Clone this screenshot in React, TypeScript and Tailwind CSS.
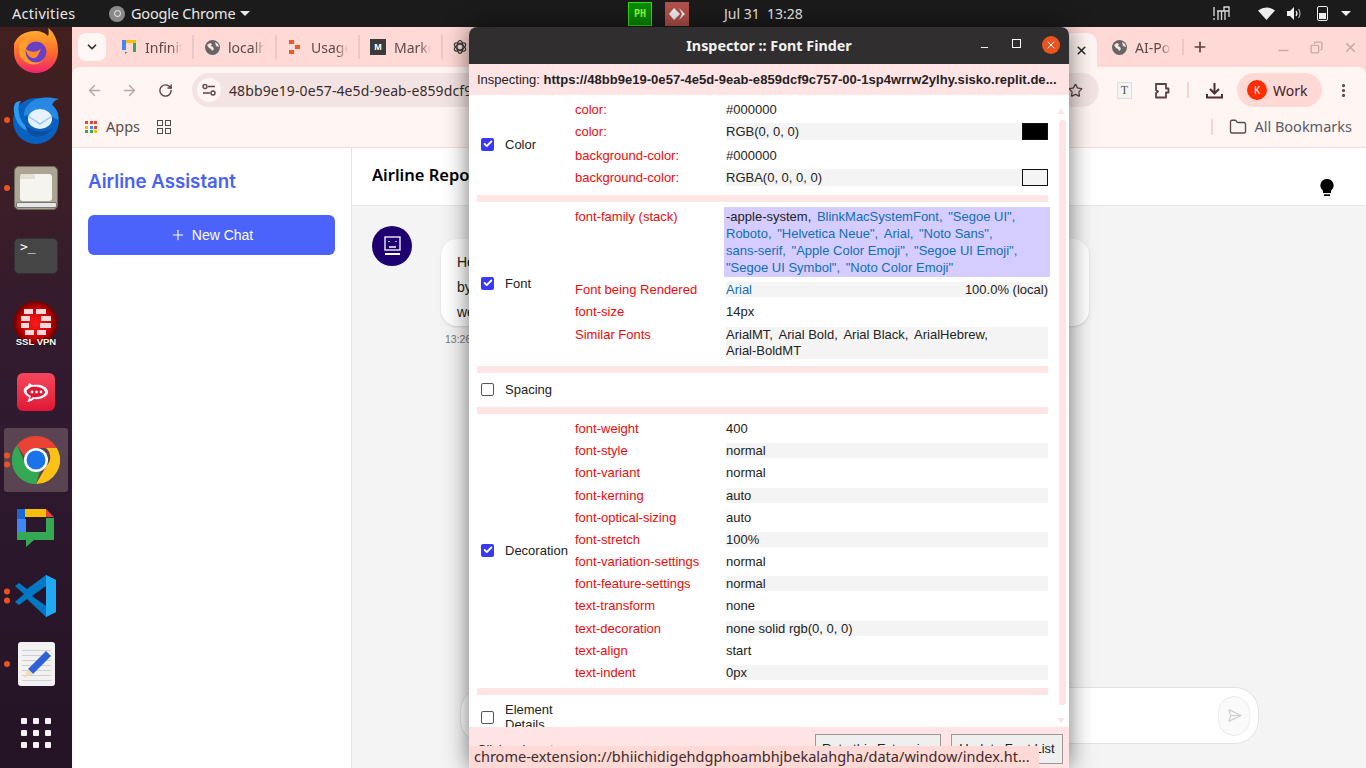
import React from 'react';
import { ArrowLeft, ArrowRight, Check, ChevronDown, Copy, Folder, Minus, MoreVertical, Plus, RotateCw, SendHorizontal, Star, X } from 'lucide-react';

const sans = 'font-["Liberation_Sans",Arial,sans-serif]';

const Dot = ({ n = 1 }: { n?: number }) => (
  <div className="absolute left-[4px] top-1/2 -translate-y-1/2 flex flex-col gap-[3px]">
    {Array.from({ length: n }).map((_, i) => <div key={i} className="w-[6px] h-[6px] rounded-full bg-[#e95420]" />)}
  </div>
);

const Firefox = () => (
  <svg width="46" height="46" viewBox="0 0 46 46">
    <defs><linearGradient id="ff" x1="0" y1="0" x2="0" y2="1"><stop offset="0" stopColor="#ffb52e" /><stop offset="0.55" stopColor="#ff6a2b" /><stop offset="1" stopColor="#f0246f" /></linearGradient></defs>
    <path d="M1 16C4 8 12 3 22 3c6 0 10 2 13 5 1-3 1-5 0-8 6 4 10 12 10 23 0 13-10 22-22 22S1 36 1 24z" fill="url(#ff)" />
    <path d="M6 17c3-6 10-8 15-7-4 1-6 3-7 5 5-1 14 0 18 7 2 6-1 12-8 14-8 2-16-3-18-11z" fill="#ff9c2e" />
    <circle cx="23" cy="24" r="10.500" fill="#6a3fc4" />
    <path d="M13 21c5 4 11 3 15 0-2 4-3 8-6 9-5 1-9-4-9-9z" fill="#ff8a2e" />
  </svg>
);

const Thunderbird = () => (
  <svg width="50" height="48" viewBox="0 0 50 48">
    <circle cx="25" cy="25" r="23" fill="#0a62c0" />
    <path d="M3 16C2 8 5 5 10 5c-3 4-3 8-2 12 1 8 6 14 14 18C12 36 5 28 3 16z" fill="#2f9bee" />
    <path d="M17 9C23 1 36 0 48 3c-4 1-6 3-7 6 5 4 7 9 6 15-8-6-24-8-34-4 0-5 1-8 4-11z" fill="#2688e3" />
    <ellipse cx="29" cy="23" rx="12" ry="10" fill="#e6f2fd" />
    <path d="M17 20l12 8 12-8" fill="none" stroke="#9cc6ee" strokeWidth="1.500" />
    <path d="M14 28c6 8 18 10 28 4-6 8-14 10-20 8-4-2-7-6-8-12z" fill="#0d4f9e" />
  </svg>
);

const FilesIcon = () => (
  <div className="w-[44px] h-[44px] rounded-[5px] bg-[#aca593] border border-[#6f6a5e] flex flex-col items-center justify-end relative">
    <div className="w-[32px] h-[27px] mb-[1px] bg-[#f6f4ee] rounded-[3px]" />
    <div className="w-[41px] h-[6px] mb-[1px] bg-[#e6e6e6] rounded-[2px] border border-[#777]" />
    <div className="absolute left-[5px] top-[7px] w-[15px] h-[5px] rounded-t-[3px] bg-[#e4e0d6]" />
  </div>
);

const TerminalIcon = () => (
  <div className="w-[44px] h-[36px] rounded-[5px] bg-[#454545] border border-[#333] relative">
    <span className={`absolute left-[5px] top-0 text-[13px] leading-4 text-white font-["DejaVu_Sans_Mono",monospace]`}>&gt;_</span>
  </div>
);

const VpnIcon = () => (
  <div className="relative w-[46px] h-[46px]">
    <svg width="46" height="44" viewBox="0 0 46 44">
      <defs><radialGradient id="vp"><stop offset="0" stopColor="#ff1c1c" /><stop offset="0.7" stopColor="#c40000" /><stop offset="1" stopColor="#6b0000" /></radialGradient></defs>
      <circle cx="22.500" cy="22" r="22" fill="url(#vp)" />
      <g fill="#ffd9d9">
        <path d="M11 8h9v5h-9zM23 8h10v5H23zM8 15h9v5H8zM28 15h10v5H28zM8 22h8v5H8zM27 22h11v5H27zM12 29h9v5h-9zM24 29h9v5h-9z" />
      </g>
    </svg>
    <span className={`absolute left-0 right-0 bottom-0 text-center text-[9.500px] leading-[10px] font-bold text-white [text-shadow:0_0_2px_#000] ${sans}`}>SSL VPN</span>
  </div>
);

const RocketIcon = () => (
  <div className="w-[38px] h-[38px] rounded-[6px] bg-gradient-to-b from-[#f5455c] to-[#e11436] flex items-center justify-center">
    <svg width="28" height="24" viewBox="0 0 28 24">
      <path d="M7 3c2 1 3 2 4 2 5-1 13 0 15 6 1 5-7 9-14 8-2 2-5 3-7 3 1-1 2-3 2-5C3 15 1 12 2 9c1-2 2-3 4-3z" fill="#fff" />
      <path d="M9 7c5-1 13 0 14 5 0 3-6 6-12 5-1 1-2 2-3 2l1-3C5 14 4 12 5 10c1-1 3-2 4-3z" fill="#e11436" />
      <circle cx="10" cy="12" r="1.400" fill="#fff" /><circle cx="14.500" cy="12" r="1.400" fill="#fff" /><circle cx="19" cy="12" r="1.400" fill="#fff" />
    </svg>
  </div>
);

const ChromeIcon = ({ size = 48 }: { size?: number }) => (
  <svg width={size} height={size} viewBox="0 0 48 48">
    <path d="M24 0a24 24 0 0 1 20.800 12H24a12 12 0 0 0-11.500 8.500L5 9A24 24 0 0 1 24 0z" fill="#ea4335" />
    <path d="M44.800 12A24 24 0 0 1 24 48l10.400-18A12 12 0 0 0 34 12z" fill="#fbc116" />
    <path d="M24 48A24 24 0 0 1 5 9l9.600 21A12 12 0 0 0 28 35.300z" fill="#34a853" />
    <circle cx="24" cy="24" r="12" fill="#fff" /><circle cx="24" cy="24" r="9.500" fill="#1a73e8" />
  </svg>
);

const ChatIcon = () => (
  <svg width="38" height="38" viewBox="0 0 38 38">
    <path d="M0 0h8v10H0z" fill="#1a67d2" /><path d="M0 10h9v13H0z" fill="#4285f4" /><path d="M0 23h9v8H0z" fill="#188038" />
    <path d="M8 0h21v8H8z" fill="#fbbc04" /><path d="M29 0l8 8h-8z" fill="#ea4335" />
    <path d="M29 9h8v22H17l-8 7v-7H0v-8h29z" fill="#34a853" />
  </svg>
);

const VsCodeIcon = () => (
  <svg width="44" height="44" viewBox="0 0 44 44">
    <path d="M32 1l10 5v32l-10 5-19-18-8 6-4-3 9-8-9-8 4-3 8 6z" fill="#0078c4" />
    <path d="M32 1l10 5v32l-10 5z" fill="#23a9f2" />
    <path d="M32 12v20L18 22z" fill="#241530" />
  </svg>
);

const EditorIcon = () => (
  <div className="relative w-[37px] h-[44px] rounded-[3px] bg-[#f2f2f2] flex flex-col gap-[4px] px-[4px] pt-[8px]">
    {Array.from({ length: 7 }).map((_, i) => <div key={i} className="h-px bg-[#cfcfcf]" />)}
    <svg className="absolute left-[4px] top-[8px]" width="30" height="30" viewBox="0 0 30 30">
      <path d="M24 1l5 5-18 18-5-5z" fill="#2f62d8" />
      <path d="M6 19l5 5-9 4z" fill="#f6d9b5" />
    </svg>
  </div>
);

// gray disc with pale land patches, the favicon chrome shows for pages without one
const GlobeFav = () => (
  <svg width="15" height="15" viewBox="0 0 15 15">
    <circle cx="7.500" cy="7.500" r="7.500" fill="#666" />
    <path d="M2 5l3-2 2 1-1 2 2 1 1 2-2 2-1-2-2-1zM10 2l3 2 1 3-3-1z" fill="#ffe3df" />
  </svg>
);

const dockItems: { el: React.ReactNode; dots?: number; active?: boolean }[] = [
  { el: <Firefox /> },
  { el: <Thunderbird />, dots: 1 },
  { el: <FilesIcon />, dots: 1 },
  { el: <TerminalIcon /> },
  { el: <VpnIcon /> },
  { el: <RocketIcon /> },
  { el: <ChromeIcon />, dots: 2, active: true },
  { el: <ChatIcon /> },
  { el: <VsCodeIcon />, dots: 2 },
  { el: <EditorIcon />, dots: 1 },
];

const Dock = () => (
  <div className="w-[72px] h-[741px] shrink-0 flex flex-col items-center bg-gradient-to-b from-[#43201f] via-[#301a30] to-[#241325] overflow-hidden">
    {dockItems.map((d, i) => (
      <div key={i} className={`relative w-full flex justify-center ${i === 0 ? 'h-[59px] items-start pt-[1px]' : 'h-[68px] items-center'}`}>
        {d.active && <div className="absolute left-[4px] right-[4px] top-[2px] bottom-[2px] rounded-[3px] bg-[#5a4451]" />}
        {d.dots ? <Dot n={d.dots} /> : null}
        <div className="relative">{d.el}</div>
      </div>
    ))}
    <div className="mt-[20px] grid grid-cols-3 gap-[6px]">
      {Array.from({ length: 9 }).map((_, i) => <div key={i} className="w-[6px] h-[6px] rounded-[1px] bg-[#f4f1f2]" />)}
    </div>
  </div>
);

const TopBar = () => (
  <div className={`h-[27px] shrink-0 bg-[#1b1b1b] text-[#e8e8e8] flex items-center text-[14.500px] font-["Noto_Sans",sans-serif] relative`}>
    <span className="ml-[12px] w-[97px] tracking-[0.3px]">Activities</span>
    <div className="w-[16px] h-[16px] rounded-full bg-[#8a8a8a] flex items-center justify-center"><div className="w-[7px] h-[7px] rounded-full border border-[#eee]" /></div>
    <span className="ml-[6px] w-[104px] whitespace-nowrap tracking-[-0.2px]">Google Chrome</span>
    <div className="ml-[5px] w-0 h-0 border-l-[5px] border-r-[5px] border-t-[5px] border-l-transparent border-r-transparent border-t-[#e8e8e8]" />
    <div className={`ml-[378px] w-[24px] h-[24px] bg-[#0a8a00] border border-[#2ee000] text-[#8cff4a] text-[10px] leading-[22px] text-center font-bold font-["DejaVu_Sans_Mono",monospace]`}>PH</div>
    <div className="ml-[13px] w-[24px] h-[24px] bg-[#b2504a] flex items-center justify-center">
      <svg width="17" height="14" viewBox="0 0 17 14"><path d="M5 1l6 6-6 6-5-6z" fill="#eee" /><path d="M10 1l6 6-6 6 3-6z" fill="#eee" /></svg>
    </div>
    <span className="ml-[35px] text-[14px]">Jul 31&nbsp;&nbsp;13:28</span>
    <div className="ml-auto flex items-center">
      <svg width="17" height="15" viewBox="0 0 17 15" className="mr-[28px]" fill="none" stroke="#ddd" strokeWidth="1.300"><path d="M1 1v9M1 12v2" /><path d="M4 5h12M5 5v9M8.500 5v9M12 5v9M11 5V1h5v10" /></svg>
      <svg width="17" height="13" viewBox="0 0 17 13" className="mr-[12px]"><path d="M0 3.500Q8.500-2.500 17 3.500L8.500 13z" fill="#eee" /></svg>
      <svg width="15" height="13" viewBox="0 0 15 13" className="mr-[15px]" fill="none" stroke="#aaa" strokeWidth="1.200"><path d="M0 4h3l4-4v13L3 9H0z" fill="#eee" stroke="none" /><path d="M9 4q2 2.500 0 5" stroke="#eee" /><path d="M11.500 2q3 4.500 0 9" /></svg>
      <div className="w-[11px] h-[15px] rounded-[2px] border border-[#eee] flex items-end mr-[13px] p-px"><div className="w-full h-[6px] bg-[#eee]" /></div>
      <div className="mr-[15px] w-0 h-0 border-l-[5px] border-r-[5px] border-t-[5px] border-l-transparent border-r-transparent border-t-[#eee]" />
    </div>
  </div>
);

const Tab = ({ icon, label }: { icon: React.ReactNode; label: string }) => (
  <div className="flex items-center w-[73px] h-[24px] border-r-2 border-[#e9c9c5] shrink-0">
    <div className="w-[16px] flex justify-center shrink-0">{icon}</div>
    <span className="ml-[8px] overflow-hidden whitespace-nowrap text-[#5d4a48] [mask-image:linear-gradient(to_right,black_70%,transparent)] w-[37px]">{label}</span>
  </div>
);

const TabStrip = () => (
  <div className={`h-[40px] shrink-0 bg-[#ffd9d5] flex items-center font-["Noto_Sans",sans-serif] text-[14px] relative`}>
    <div className="ml-[6px] w-[28px] h-[28px] rounded-[8px] bg-[#fff7f5] flex items-center justify-center mr-[15px]"><ChevronDown size={14} strokeWidth={3} className="text-[#3a2a2a]" /></div>
    <div className="flex items-center gap-[10px]">
      <Tab label="Infinity" icon={<svg width="14" height="14" viewBox="0 0 14 14"><path d="M0 0h4v10H0z" fill="#4285f4" /><path d="M4 0h10v3H4z" fill="#fbbc04" /><path d="M11 3h3v9H6l-3 2v-2h8z" fill="#34a853" /></svg>} />
      <Tab label="localhost" icon={<GlobeFav />} />
      <Tab label="Usage" icon={<svg width="12" height="14" viewBox="0 0 12 14" fill="#f0591e"><path d="M0 0h5v4H0zM0 10h5v4H0zM6 5h5v4H6z" /></svg>} />
      <Tab label="Markdown" icon={<div className={`w-[16px] h-[16px] bg-[#3b3b3b] text-white text-[9px] leading-[16px] text-center font-bold ${sans}`}>M</div>} />
      <svg width="14" height="14" viewBox="0 0 14 14" fill="none" stroke="#3a3a3a" strokeWidth="1.300"><ellipse cx="7" cy="7" rx="3" ry="6.300" /><ellipse cx="7" cy="7" rx="3" ry="6.300" transform="rotate(60 7 7)" /><ellipse cx="7" cy="7" rx="3" ry="6.300" transform="rotate(120 7 7)" /></svg>
    </div>
    <div className="absolute left-[979px] top-[6px] w-[46px] h-[34px] rounded-t-[10px] bg-[#fff5f3] flex items-center justify-center"><X size={13} strokeWidth={3} className="ml-[14px] text-[#2b2b2b]" /></div>
    <div className="absolute left-[1040px] top-[8px] h-[24px] flex items-center">
      <GlobeFav />
      <span className="ml-[8px] w-[36px] overflow-hidden whitespace-nowrap text-[#5d4a48] [mask-image:linear-gradient(to_right,black_70%,transparent)]">AI-Powered</span>
      <div className="ml-[11px] w-[2px] h-[16px] bg-[#e9c9c5]" />
      <Plus size={16} strokeWidth={2.500} className="ml-[8px] text-[#5d4040]" />
      <Minus size={15} strokeWidth={2.500} className="ml-[68px] mt-[6px] text-[#c5aaa8]" />
      <Copy size={13} strokeWidth={2.500} className="ml-[19px] -scale-x-100 text-[#c5aaa8]" />
      <X size={15} strokeWidth={2.500} className="ml-[20px] text-[#c5aaa8]" />
    </div>
  </div>
);

const Toolbar = () => (
  <div className={`h-[46px] shrink-0 bg-[#fff5f3] rounded-tl-[8px] rounded-tr-[8px] flex items-center font-["Noto_Sans",sans-serif] relative text-[#5d4040]`}>
    <ArrowLeft size={17} className="ml-[14px] text-[#b9a8a6]" />
    <ArrowRight size={17} className="ml-[18px] text-[#b9a8a6]" />
    <RotateCw size={15} strokeWidth={2.200} className="ml-[20px] text-[#5d4040]" />
    <div className="ml-[19px] w-[907px] h-[34px] rounded-full bg-[#f3e4e3] flex items-center pl-[5px]">
      <div className="w-[24px] h-[24px] rounded-full bg-[#fff5f3] flex items-center justify-center">
        <svg width="14" height="12" viewBox="0 0 14 12" fill="none" stroke="currentColor" strokeWidth="1.400"><circle cx="3" cy="2.500" r="2" /><path d="M6 2.500h7M1 9h7" /><circle cx="11" cy="9" r="2" /></svg>
      </div>
      <span className="ml-[8px] text-[14px] text-[#3a2c2c] tracking-[0.1px]">48bb9e19-0e57-4e5d-9eab-e859dcf9c757-00-1sp4wrrw2ylhy</span>
      <Star size={15} strokeWidth={2} className="ml-auto mr-[16px]" />
    </div>
    <div className={`ml-[18px] w-[15px] h-[17px] bg-[#f4f4f4] border border-[#ddd] text-[12px] leading-[15px] text-center font-["Liberation_Serif",serif] text-[#555]`}>T</div>
    <svg width="17" height="17" viewBox="0 0 17 17" className="ml-[21px]" fill="none" stroke="currentColor" strokeWidth="1.800"><path d="M3 2h10v4.500h2.500v4H13V15.500H3v-4.500l2-1.500-2-1.500z" strokeLinejoin="round" /></svg>
    <div className="ml-[17px] w-[2px] h-[16px] bg-[#f4d5d0]" />
    <svg width="17" height="17" viewBox="0 0 17 17" className="ml-[17px] text-[#4b2f2f]" fill="none" stroke="currentColor" strokeWidth="2"><path d="M8.500 1v10M4 7l4.500 4.500L13 7M1 12v3.500h15V12" /></svg>
    <div className="ml-[14px] w-[85px] h-[34px] rounded-full bg-[#ffd9d5] flex items-center pl-[10px]">
      <div className={`w-[20px] h-[20px] rounded-full bg-[#ff2d00] text-white text-[10px] leading-[20px] text-center`}>K</div>
      <span className="ml-[6px] text-[14px] text-[#40201f]">Work</span>
    </div>
    <MoreVertical size={17} strokeWidth={2.500} className="ml-[13px]" />
  </div>
);

const Bookmarks = () => (
  <div className={`h-[35px] pb-[6px] shrink-0 bg-[#fff5f3] border-b border-[#f5dcd8] flex items-center font-["Noto_Sans",sans-serif] text-[14.500px] text-[#5d4a48]`}>
    <div className="ml-[13px] grid grid-cols-3 gap-[1.500px]">
      {['#ea4335', '#ea4335', '#ea4335', '#fbbc04', '#4285f4', '#ea4335', '#34a853', '#34a853', '#fbbc04'].map((c, i) => <div key={i} className="w-[3px] h-[3px]" style={{ background: c }} />)}
    </div>
    <span className="ml-[9px]">Apps</span>
    <div className="ml-[17px] grid grid-cols-2 gap-[2px]">
      {[0, 1, 2, 3].map(i => <div key={i} className="w-[6px] h-[6px] border-[1.500px] border-[#5d4a48]" />)}
    </div>
    <div className="ml-auto w-[2px] h-[16px] bg-[#f8d4cf]" />
    <Folder size={18} strokeWidth={1.800} className="ml-[16px]" />
    <span className="ml-[7px] mr-[14px] text-[#5a5a6a]">All Bookmarks</span>
  </div>
);

const Page = () => (
  <div className="flex-1 flex min-h-0">
    <div className={`w-[280px] shrink-0 bg-white border-r border-[#e5e5e5] pt-[21px] px-[16px]`}>
      <div className={`text-[18.700px] leading-[26px] font-semibold text-[#4a61f5] font-["Inter",sans-serif]`}>Airline Assistant</div>
      <div className={`mt-[20px] h-[40px] rounded-[6px] bg-[#4c63fb] text-white flex items-center justify-center text-[14px] ${sans}`}>
        <Plus size={16} strokeWidth={1.600} /><span className="ml-[6px]">New Chat</span>
      </div>
    </div>
    <div className="flex-1 flex flex-col bg-[#f4f4f4] min-w-0">
      <div className="h-[58px] shrink-0 bg-white border-b border-[#e8e8e8] flex items-center pl-[20px] pr-[32px] justify-between">
        <span className={`-mt-[2px] text-[16.500px] font-semibold text-black font-["Noto_Sans",sans-serif]`}>Airline Reports</span>
        <svg width="14" height="18" viewBox="0 0 14 18" className="mt-[22px]"><path d="M7 0a6.500 6.500 0 0 1 4 11.700V14H3v-2.300A6.500 6.500 0 0 1 7 0z" fill="#000" /><path d="M4 15.300h6V17H4z" fill="#000" /></svg>
      </div>
      <div className="flex-1 relative min-h-0">
        <div className="flex pl-[20px] pt-[20px]">
          <div className="w-[40px] h-[40px] rounded-full bg-[#1f0070] flex items-center justify-center">
            <svg width="17" height="20" viewBox="0 0 17 20" fill="none" stroke="#fff" strokeWidth="1.300"><rect x="1" y="1" width="15" height="13" /><path d="M5 5v1M12 5v1M5 11h7" /><path d="M1 18h15" strokeWidth="2" /></svg>
          </div>
          <div className="ml-[29px] mt-[13px] w-[648px]">
            <div className={`h-[87px] rounded-[16px] bg-white shadow-sm pl-[16px] pt-[11px] text-[14px] leading-[25px] text-[#222] ${sans}`}>
              <div>Hello</div><div>by</div><div>we</div>
            </div>
            <div className={`mt-[6px] ml-[4px] text-[10.500px] text-[#777] ${sans}`}>13:26</div>
          </div>
        </div>
        <div className="absolute left-[108px] top-[481px] w-[799px] h-[57px] rounded-[24px] bg-white border border-[#e2e2e2] flex items-center justify-end pr-[8px]">
          <div className="w-[32px] h-[40px] rounded-full border border-[#ececec] bg-[#fafafa] flex items-center justify-center"><SendHorizontal size={15} className="text-[#d0d0d0]" /></div>
        </div>
      </div>
    </div>
  </div>
);

const Row = ({ label, value, alt, h = 22, tall }: { label: string; value: React.ReactNode; alt?: boolean; h?: number; tall?: boolean }) => (
  <div className="flex items-center" style={{ height: h }}>
    <span className="w-[151px] text-[#f00a0a] shrink-0">{label}</span>
    <div className={`w-[322px] ${tall ? 'h-[17px] leading-[17px]' : 'h-[15px] leading-[15px]'} ${alt ? 'bg-[#f4f4f4]' : ''}`}>{value}</div>
  </div>
);

const Sep = () => <div className="h-[7px] w-[571px] ml-[8px] bg-[#ffe4e6]" />;

const CheckBox = ({ checked }: { checked?: boolean }) => (
  checked
    ? <div className="w-[13px] h-[13px] rounded-[2px] bg-[#3838f6] flex items-center justify-center"><Check size={10} strokeWidth={4.500} className="text-white" /></div>
    : <div className="w-[13px] h-[13px] rounded-[2px] border border-[#555] bg-white" />
);

const Section = ({ name, checked, children, h }: { name: React.ReactNode; checked?: boolean; children?: React.ReactNode; h: number }) => (
  <div className="flex items-center" style={{ height: h }}>
    <div className="ml-[12px] w-[13px] shrink-0 -mt-[2px]"><CheckBox checked={checked} /></div>
    <div className="ml-[11px] w-[69px] shrink-0 text-[#222] -mt-[2px]">{name}</div>
    <div className="ml-[1px]">{children}</div>
  </div>
);

const Items = ({ list, blue }: { list: string[]; blue?: boolean }) => (
  <>
    {list.map((t, i) => <span key={i} className={`mr-[2px] ${blue && i > 0 ? 'text-[#0f6fb8]' : ''}`}>{t}</span>)}
  </>
);

const Inspector = () => (
  <div className={`absolute left-[469px] top-[27px] w-[600px] h-[741px] rounded-t-[8px] overflow-hidden bg-white shadow-[0_0_24px_rgba(0,0,0,0.55)] text-[13px] flex flex-col ${sans}`}>
    <div className={`h-[37px] shrink-0 bg-[#302e2e] text-[#f2f2f2] flex items-center justify-center relative font-bold text-[14.300px] font-["Noto_Sans",sans-serif]`}>
      <span>Inspector :: Font Finder</span>
      <Minus size={11} strokeWidth={2} className="absolute left-[510px] top-[15px] text-white" />
      <div className="absolute left-[543px] top-[12px] w-[9px] h-[9px] border border-white" />
      <div className="absolute left-[573px] top-[9px] w-[18px] h-[18px] rounded-full bg-[#e95420] flex items-center justify-center"><X size={12} strokeWidth={2} className="text-white" /></div>
    </div>
    <div className="h-[31px] shrink-0 bg-[#ffe4e6] flex items-center pl-[8px] whitespace-nowrap text-[#222]">
      Inspecting:&nbsp;<b className="tracking-[0.04px]">https://48bb9e19-0e57-4e5d-9eab-e859dcf9c757-00-1sp4wrrw2ylhy.sisko.replit.de...</b>
    </div>
    <div className="flex-1 relative overflow-hidden leading-[15px]">
      <div className="absolute right-[4px] top-[14px] w-0 h-0 border-l-[4px] border-r-[4px] border-b-[5px] border-l-transparent border-r-transparent border-b-[#ffe4e6]" />
      <div className="absolute right-[3px] top-[25px] w-[7px] h-[585px] rounded-full bg-[#ffe4e6]" />
      <div className="absolute right-[4px] top-[623px] w-0 h-0 border-l-[4px] border-r-[4px] border-t-[5px] border-l-transparent border-r-transparent border-t-[#ffe4e6]" />
      <Section h={100} checked name="Color">
        <div className="text-[#222] -mt-[4px]">
          <Row label="color:" value="#000000" />
          <div className="relative"><Row label="color:" value="RGB(0, 0, 0)" alt tall /><div className="absolute left-[447px] top-[3px] w-[26px] h-[17px] bg-black border border-[#111]" /></div>
          <div className="mt-[2px]"><Row label="background-color:" value="#000000" /></div>
          <div className="relative"><Row label="background-color:" value="RGBA(0, 0, 0, 0)" alt tall /><div className="absolute left-[447px] top-[3px] w-[26px] h-[17px] bg-[#f4f4f4] border border-[#111]" /></div>
        </div>
      </Section>
      <Sep />
      <Section h={164} checked name="Font">
        <div className="text-[#222] -mt-[2px]">
          <div className="flex">
            <span className="w-[149px] text-[#f00a0a] pt-[2px]">font-family (stack)</span>
            <div className="w-[326px] h-[70px] bg-[#d5ccff] pl-[2px] pt-[1px] leading-[17px] whitespace-nowrap">
              <Items blue list={['-apple-system, ', 'BlinkMacSystemFont, ', '"Segoe UI",']} /><br />
              <span className="text-[#0f6fb8]"><Items list={['Roboto, ', '"Helvetica Neue", ', 'Arial, ', '"Noto Sans",']} /><br />
              <Items list={['sans-serif, ', '"Apple Color Emoji", ', '"Segoe UI Emoji",']} /><br />
              <Items list={['"Segoe UI Symbol", ', '"Noto Color Emoji"']} /></span>
            </div>
          </div>
          <div className="mt-[1px]">
            <Row label="Font being Rendered" alt value={<div className="flex justify-between"><span className="text-[#0f6fb8]">Arial</span><span>100.0% (local)</span></div>} />
            <Row label="font-size" value="14px" />
          </div>
          <div className="flex mt-[5px]">
            <span className="w-[151px] text-[#f00a0a]">Similar Fonts</span>
            <div className="w-[322px] h-[32px] bg-[#f4f4f4] leading-[16px] whitespace-nowrap"><Items list={['ArialMT, ', 'Arial Bold, ', 'Arial Black, ', 'ArialHebrew,']} /><br />Arial-BoldMT</div>
          </div>
        </div>
      </Section>
      <Sep />
      <Section h={34} name="Spacing" />
      <Sep />
      <Section h={274} checked name="Decoration">
        <div className="text-[#222] -mt-[1px]">
          {[['font-weight', '400'], ['font-style', 'normal'], ['font-variant', 'normal'], ['font-kerning', 'auto'], ['font-optical-sizing', 'auto'], ['font-stretch', '100%'], ['font-variation-settings', 'normal'], ['font-feature-settings', 'normal'], ['text-transform', 'none'], ['text-decoration', 'none solid rgb(0, 0, 0)'], ['text-align', 'start'], ['text-indent', '0px']].map(([l, v], i) => (
            <Row key={l} label={l} value={v} alt={i % 2 === 1} h={22.200} />
          ))}
        </div>
      </Section>
      <Sep />
      <Section h={46} name={<div className="leading-[15px]">Element<br />Details</div>} />
    </div>
    <div className="h-[41px] shrink-0 bg-[#ffe4e6] relative text-[#222]">
      <span className="absolute left-[8px] top-[13px]">Click values to copy</span>
      <div className="absolute left-[346px] top-[7px] w-[126px] h-[30px] bg-[#efefef] border border-[#999] flex items-center justify-center">Rate this Extension</div>
      <div className="absolute left-[482px] top-[7px] w-[112px] h-[30px] bg-[#efefef] border border-[#999] flex items-center justify-center">Update Font List</div>
      <div className={`absolute left-0 top-[19px] w-[570px] h-[22px] bg-[#ffd9d5] flex items-center pl-[5px] text-[14.500px] text-[#3a2c2c] whitespace-nowrap font-["Noto_Sans",sans-serif]`}>chrome-extension://bhiichidigehdgphoambhjbekalahgha/data/window/index.ht...</div>
    </div>
  </div>
);

export default function App() {
  return (
    <div className="w-[1366px] h-[768px] overflow-hidden flex flex-col relative bg-white">
      <TopBar />
      <div className="flex-1 flex min-h-0">
        <Dock />
        <div className="flex-1 flex flex-col min-w-0 bg-[#ffd9d5]">
          <TabStrip />
          <Toolbar />
          <Bookmarks />
          <Page />
        </div>
      </div>
      <Inspector />
    </div>
  );
}
